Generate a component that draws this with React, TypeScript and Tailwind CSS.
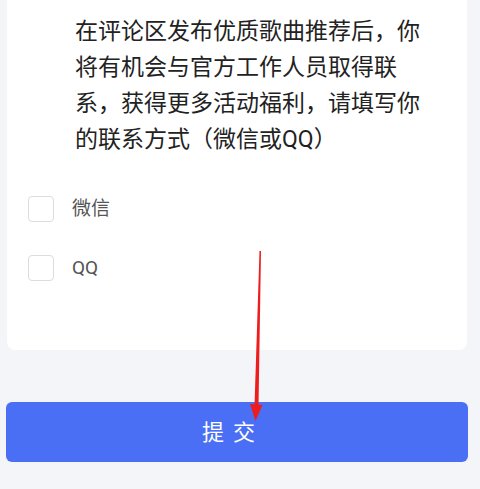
const OPTIONS = ['微信', 'QQ'];

const cjk = { fontFamily: 'Roboto, "Noto Sans CJK SC", "Noto Sans", sans-serif' };

function PointerArrow() {
  return (
    <svg
      aria-hidden="true"
      className="absolute left-0 top-0 pointer-events-none"
      width="480"
      height="489"
      viewBox="0 0 480 489"
    >
      <polygon points="259.5,251 261,251 258.5,406 254.5,406" fill="#ee1c1c" />
      <polygon points="250,404 262.5,405 255.5,421" fill="#ee1c1c" />
    </svg>
  );
}

export default function App() {
  return (
    <div className="relative w-[480px] h-[489px] overflow-hidden bg-[#f4f5f9]" style={cjk}>
      <div className="ml-[7px] mr-[13px] h-[350px] rounded-b-[8px] bg-white">
        <p className="pl-[68px] pr-[40px] pt-[14px] text-[23px] leading-[36px] text-[#222]">
          在评论区发布优质歌曲推荐后，你将有机会与官方工作人员取得联系，获得更多活动福利，请填写你的联系方式（微信或QQ）
        </p>
        <ul className="mt-[38px] flex flex-col gap-[33px] pl-[21px]">
          {OPTIONS.map((label) => (
            <li key={label} className="flex items-center gap-[18px]">
              <span className="block w-[26px] h-[26px] rounded-[4px] border border-[#dcdcdc] bg-white" />
              <span className="text-[19px] leading-[26px] text-[#555]">{label}</span>
            </li>
          ))}
        </ul>
      </div>
      <button
        type="button"
        className="mt-[52px] ml-[6px] block w-[462px] h-[60px] rounded-[6px] bg-[#4a6ff5] text-white text-[22px] tracking-[9px] pr-[8px]"
      >
        提交
      </button>
      <PointerArrow />
    </div>
  );
}
